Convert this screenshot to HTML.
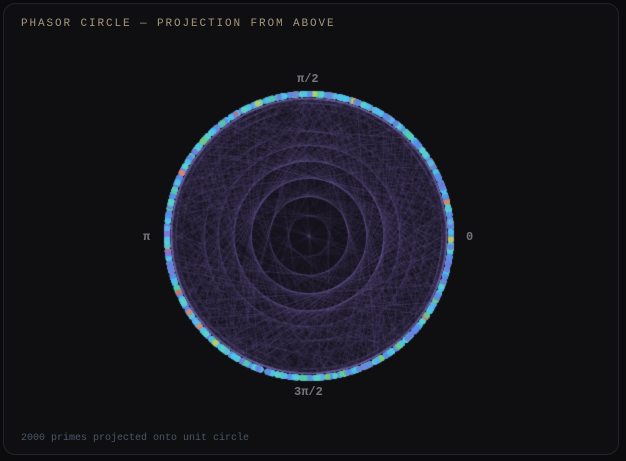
<!DOCTYPE html>
<html><head><style>
html,body{margin:0;padding:0;background:#0b0b0d;width:626px;height:461px;overflow:hidden}
.card{position:absolute;left:3px;top:3px;width:614px;height:450px;border:1px solid #23232a;border-radius:12px;background:#0f0f12}
.t{position:absolute;left:17px;top:14px;font:11px "Liberation Mono",monospace;letter-spacing:1.9px;color:#a4967c}
.f{position:absolute;left:17px;top:429px;font:10px "Liberation Mono",monospace;color:#4c5668}
.l{position:absolute;font:bold 12px "Liberation Mono",monospace;color:#75757d}
canvas{position:absolute;left:0;top:0}
</style></head><body>
<div class="card">
<div class="t">PHASOR CIRCLE — PROJECTION FROM ABOVE</div>
<div class="f">2000 primes projected onto unit circle</div>
</div>
<canvas id="c" width="626" height="461"></canvas>
<div class="l" style="left:297px;top:72px">π/2</div>
<div class="l" style="left:143px;top:230px">π</div>
<div class="l" style="left:466px;top:230px">0</div>
<div class="l" style="left:294px;top:385px">3π/2</div>
<script>
var c=document.getElementById('c').getContext('2d');
var cx=309,cy=236,R=142;
var pr=[],n=2;
while(pr.length<2000){var ok=true;for(var i=0;i<pr.length&&pr[i]*pr[i]<=n;i++)if(n%pr[i]==0){ok=false;break}if(ok)pr.push(n);n++}
c.fillStyle='#131119';c.beginPath();c.arc(cx,cy,R-3,0,7);c.fill();
c.strokeStyle='rgba(130,115,200,0.09)';c.lineWidth=0.6;
for(var i=0;i<pr.length-1;i++){var a=pr[i],b=pr[i+1];c.beginPath();c.moveTo(cx+(R-4)*Math.cos(a),cy-(R-4)*Math.sin(a));c.lineTo(cx+(R-4)*Math.cos(b),cy-(R-4)*Math.sin(b));c.stroke()}
c.strokeStyle='rgba(140,125,210,0.6)';c.lineWidth=1.2;c.beginPath();c.arc(cx,cy,R-4,0,7);c.stroke();
var cols=['#5b8de8','#4fc3e8','#5ad1c9','#6a7be0','#58b8f0','#4fd39a','#7ad06a','#c8d050','#e08a60','#d06a70','#8a6ee0'];
for(var i=0;i<pr.length;i++){var a=pr[i];var k=i%37;var col=k<9?cols[0]:k<16?cols[1]:k<22?cols[2]:k<27?cols[3]:k<30?cols[4]:k<33?cols[5]:cols[6+(i%5)];
c.fillStyle=col;c.globalAlpha=0.85;c.beginPath();c.arc(cx+R*Math.cos(a),cy-R*Math.sin(a),3,0,7);c.fill()}
</script>
</body></html>
